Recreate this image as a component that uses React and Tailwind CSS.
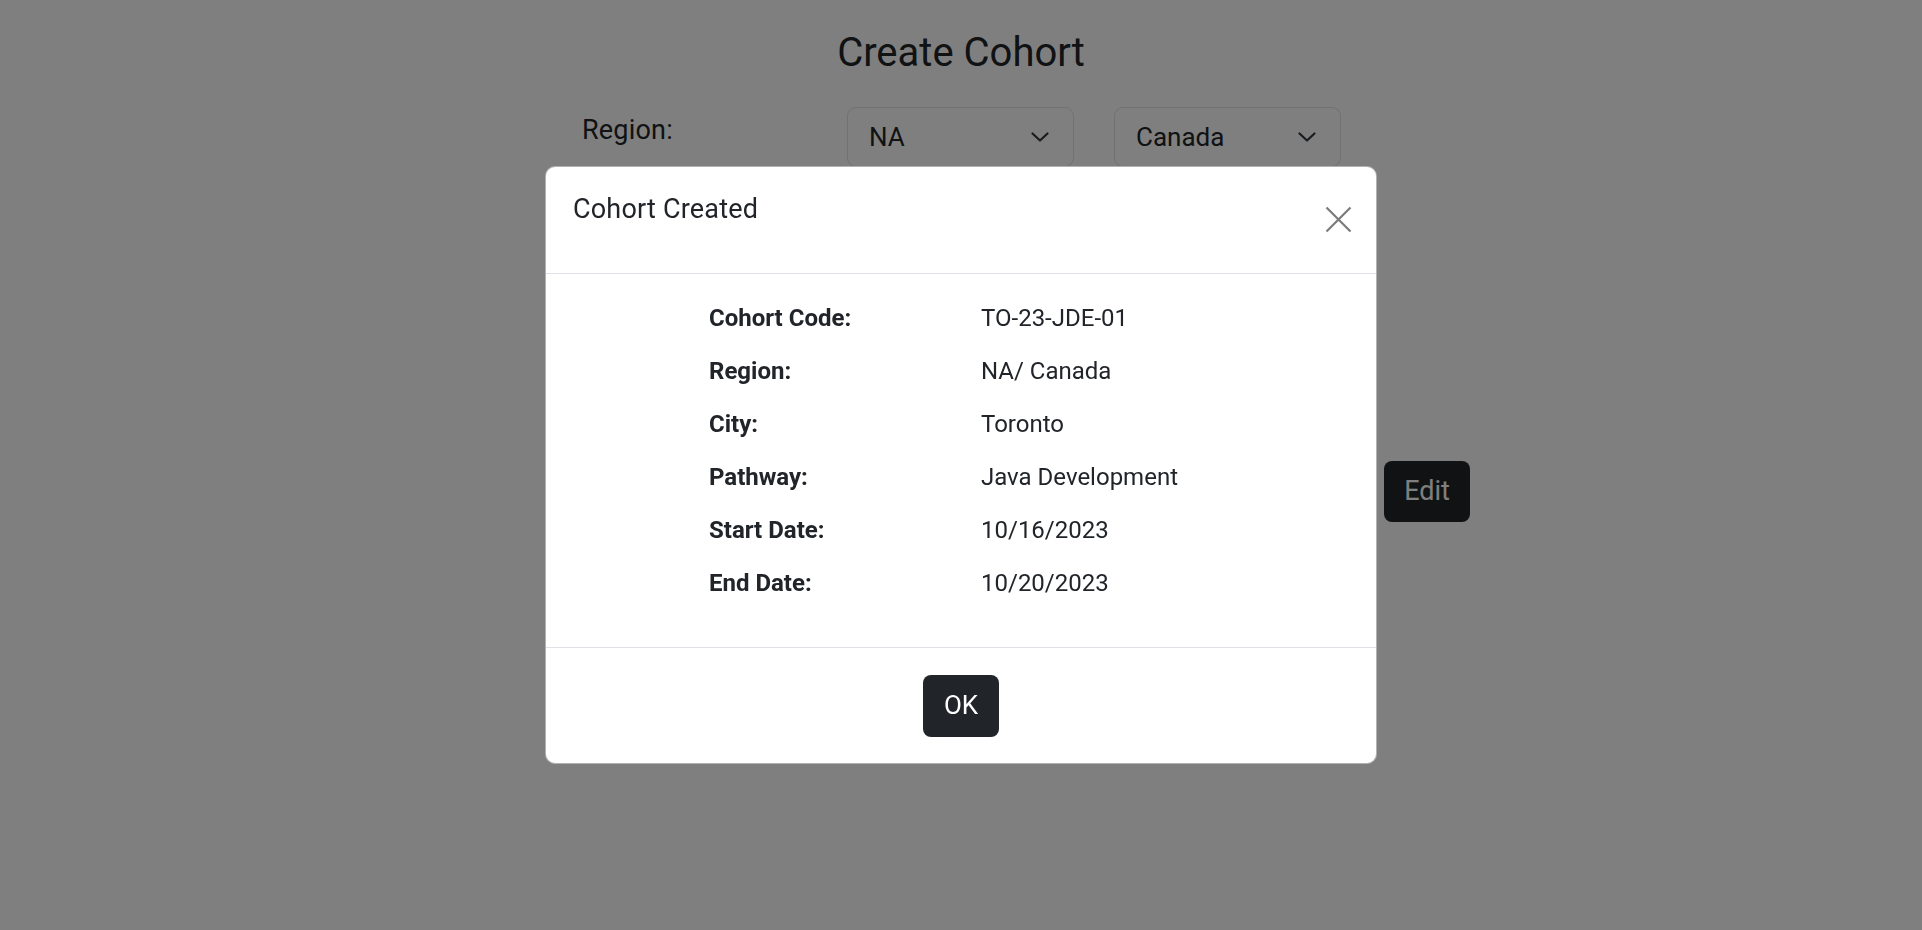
import React from "react";

const details = [
  ["Cohort Code:", "TO-23-JDE-01"],
  ["Region:", "NA/ Canada"],
  ["City:", "Toronto"],
  ["Pathway:", "Java Development"],
  ["Start Date:", "10/16/2023"],
  ["End Date:", "10/20/2023"],
];

const Chevron = () => (
  <svg width="18" height="12" viewBox="0 0 18 12" fill="none">
    <path d="M1.5 2.5 9 9.5 16.5 2.5" stroke="#343a40" strokeWidth="2.2" strokeLinecap="round" strokeLinejoin="round" />
  </svg>
);

const SelectBox = ({ value }) => (
  <div className="w-[227px] h-[60px] rounded-[9px] border border-[#dee2e6] bg-white flex items-center justify-between pl-[21px] pr-[24px]">
    <span className="text-[26px] text-[#212529]">{value}</span>
    <Chevron />
  </div>
);

const App = () => {
  return (
    <div className="relative min-h-[930px] bg-white font-['Roboto','Liberation_Sans',sans-serif] overflow-hidden">
      {/* page behind the dialog */}
      <h1 className="pt-[29px] text-center text-[40px] leading-[48px] text-[#212529]">Create Cohort</h1>
      <div className="w-[758px] mx-auto mt-[30px]">
        <div className="flex items-start h-[60px]">
          <div className="w-[265px] shrink-0 pt-[3px] text-[27px] tracking-[0.2px] text-[#212529]">Region:</div>
          <div className="flex gap-[40px]">
            <SelectBox value="NA" />
            <SelectBox value="Canada" />
          </div>
        </div>
        <div className="flex mt-[294px] h-[61px]">
          <div className="w-[758px] shrink-0" />
          <button className="ml-[44px] shrink-0 w-[86px] h-[61px] rounded-[8px] bg-[#212529] text-white text-[27px]">
            Edit
          </button>
        </div>
      </div>

      {/* backdrop */}
      <div className="fixed inset-0 bg-black/50" />

      {/* dialog */}
      <div className="fixed inset-0 flex justify-center pt-[166px]">
        <div className="w-[832px] h-[598px] bg-white rounded-[10px] border border-black/30 flex flex-col overflow-hidden">
          <div className="h-[107px] shrink-0 border-b border-[#dee2e6] flex justify-between items-start pl-[27px] pr-[24px]">
            <h5 className="mt-[26px] text-[27px] tracking-[0.2px] leading-[32px] text-[#212529]">Cohort Created</h5>
            <button className="mt-[38px] w-[28px] h-[28px] flex items-center justify-center">
              <svg width="27" height="27" viewBox="0 0 27 27" fill="none">
                <path d="M1.5 1.5 25.5 25.5M25.5 1.5 1.5 25.5" stroke="#7b7b7b" strokeWidth="2.2" />
              </svg>
            </button>
          </div>
          <div className="h-[374px] shrink-0 border-b border-[#dee2e6] pt-[17px] pl-[163px]">
            {details.map(([label, value]) => (
              <div key={label} className="grid grid-cols-[272px_1fr] h-[53px] items-center">
                <span className="text-[24px] font-bold text-[#212529]">{label}</span>
                <span className="text-[24px] text-[#212529]">{value}</span>
              </div>
            ))}
          </div>
          <div className="flex-1 flex items-center justify-center">
            <button className="w-[76px] h-[62px] rounded-[8px] bg-[#212529] text-white text-[26px]">OK</button>
          </div>
        </div>
      </div>
    </div>
  );
};

export default App;
